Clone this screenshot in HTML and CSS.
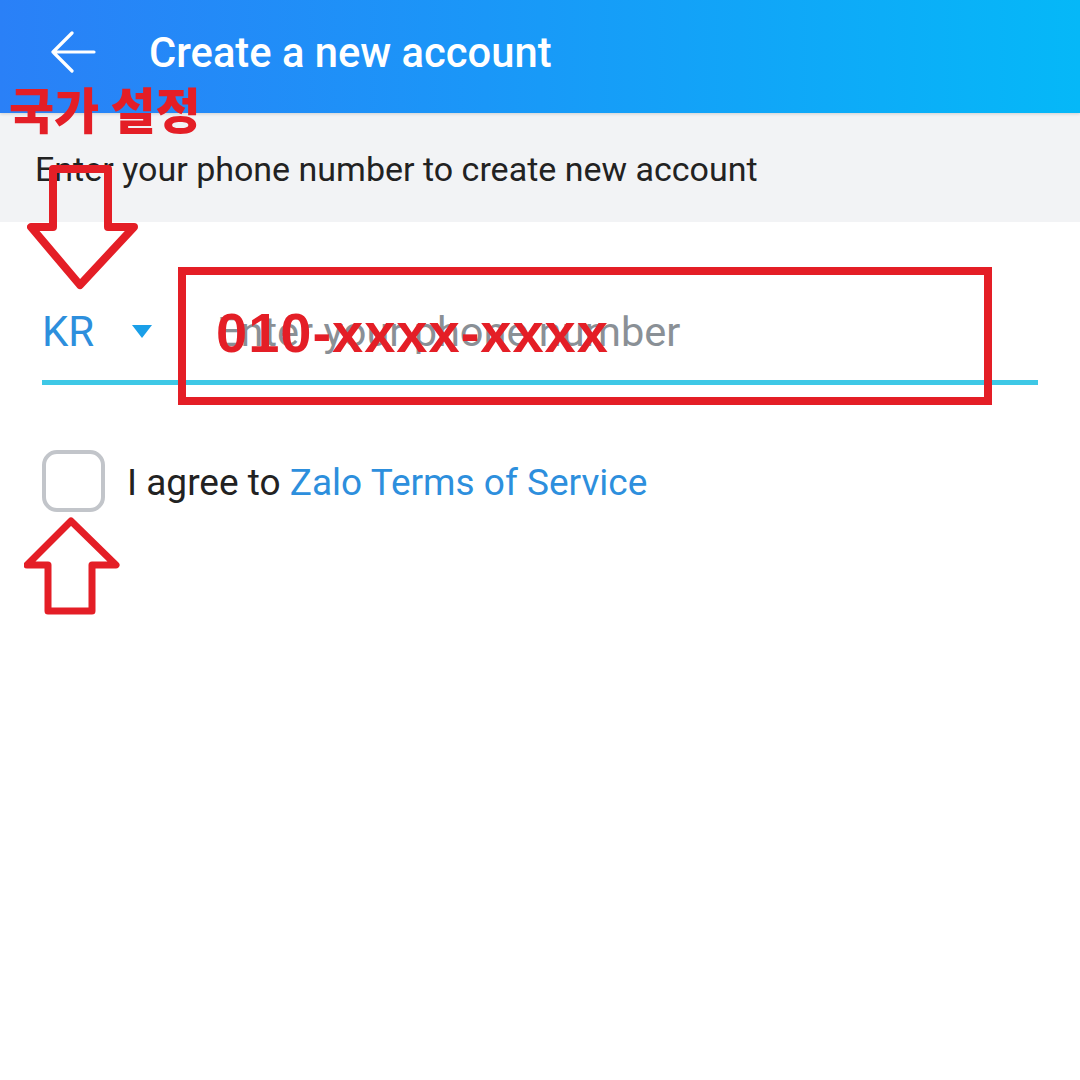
FILE: index.html
```html
<!DOCTYPE html>
<html lang="en">
<head>
    <meta charset="UTF-8">
    <meta name="viewport" content="width=device-width, initial-scale=1.0">
    <title>Create a new account</title>
    <link rel="stylesheet" href="styles.css">
</head>
<body>

    <div class="header">
        <button class="back-btn">
            <svg width="46" height="42" viewBox="0 0 46 42">
                <path d="M44 21H3M22 2L3 21l19 19" fill="none" stroke="#fff" stroke-width="3.2" stroke-linecap="round" stroke-linejoin="round"/>
            </svg>
        </button>
        <h1 class="title">Create a new account</h1>
    </div>

    <div class="intro">Enter your phone number to create new account</div>

    <div class="phone-row">
        <div class="country">
            <span>KR</span>
            <span class="caret"></span>
        </div>
        <input type="text" class="phone-input" placeholder="Enter your phone number">
    </div>

    <div class="terms">
        <span class="checkbox"></span>
        <span class="terms-text">I agree to <a class="link">Zalo Terms of Service</a></span>
    </div>

    <!-- Annotations drawn over the screenshot -->
    <div class="note note-country">국가 설정</div>
    <div class="note-box"></div>
    <div class="note note-number">010-xxxx-xxxx</div>

    <svg class="note-arrow arrow-down" width="120" height="134" viewBox="0 0 120 134">
        <path d="M26 4h55v58h26L53 120 4 62h22z" fill="none" stroke="#e41e26" stroke-width="8" stroke-linejoin="round"/>
    </svg>

    <svg class="note-arrow arrow-up" width="100" height="100" viewBox="0 0 100 100">
        <path d="M47 4L92 48H68v46H24V48H3z" fill="none" stroke="#e41e26" stroke-width="7" stroke-linejoin="round"/>
    </svg>

</body>
</html>
```

FILE: styles.css
```css
body {
    font-family: Roboto, "Noto Sans", sans-serif;
    margin: 0;
    padding: 0;
    width: 1080px;
    height: 1080px;
    background: #fff;
    color: #222;
    position: relative;
    overflow: hidden;
}

.header {
    height: 113px;
    display: flex;
    align-items: center;
    background: linear-gradient(90deg, #2a80f7 0%, #1a97f8 45%, #05b8f8 100%);
    box-shadow: 0 1px 3px rgba(0, 0, 0, 0.15);
    position: relative;
}

.back-btn {
    background: none;
    border: none;
    padding: 0;
    margin: -10px 0 0 50px;
    width: 46px;
    height: 42px;
    display: flex;
}

.title {
    margin: -8px 0 0 53px;
    font-size: 41.7px;
    font-weight: 500;
    color: #fff;
}

.intro {
    height: 109px;
    background: #f2f3f5;
    box-sizing: border-box;
    padding: 36px 0 0 35px;
    font-size: 34px;
    color: #222;
}

.phone-row {
    display: flex;
    align-items: center;
    height: 86px;
    margin: 72px 42px 0;
    border-bottom: 5px solid #3ec8e6;
}

.country {
    display: flex;
    align-items: center;
    width: 175px;
    font-size: 42px;
    color: #2d8fdd;
    margin-top: -12px;
}

.caret {
    width: 0;
    height: 0;
    margin-left: 38px;
    border-left: 10px solid transparent;
    border-right: 10px solid transparent;
    border-top: 13px solid #1a9fe8;
}

.phone-input {
    flex-grow: 1;
    border: none;
    outline: none;
    padding: 0;
    font-family: Roboto, sans-serif;
    font-size: 41.5px;
    color: #222;
    background: transparent;
    margin-top: -12px;
}

.phone-input::placeholder {
    color: #8a9096;
}

.terms {
    display: flex;
    align-items: center;
    margin: 65px 0 0 42px;
}

.checkbox {
    width: 63px;
    height: 62px;
    box-sizing: border-box;
    border: 4px solid #c2c5ca;
    border-radius: 15px;
}

.terms-text {
    margin-left: 22px;
    font-size: 37px;
    color: #222;
    padding-top: 2px;
}

.link {
    color: #2d8fdd;
}

.note {
    position: absolute;
    color: #e41e26;
    font-weight: 900;
}

.note-country {
    left: 9px;
    top: 79px;
    font-family: "Noto Sans CJK KR", sans-serif;
    font-size: 49px;
    line-height: 1.2;
}

.note-number {
    left: 216px;
    top: 299px;
    font-family: "Liberation Sans", Arial, sans-serif;
    font-weight: 700;
    font-size: 56px;
    letter-spacing: 1px;
    line-height: 1.2;
}

.note-box {
    position: absolute;
    left: 178px;
    top: 267px;
    width: 814px;
    height: 138px;
    box-sizing: border-box;
    border: 8px solid #e41e26;
}

.note-arrow {
    position: absolute;
}

.arrow-down {
    left: 27px;
    top: 165px;
}

.arrow-up {
    left: 24px;
    top: 517px;
}
```
